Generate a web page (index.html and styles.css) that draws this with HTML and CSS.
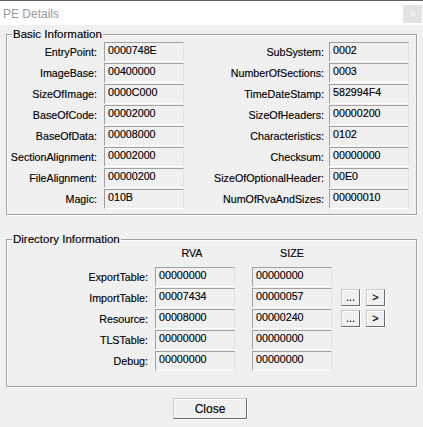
FILE: index.html
```html
<!DOCTYPE html>
<html>
<head>
<meta charset="utf-8">
<link rel="stylesheet" href="styles.css">
</head>
<body>
<div class="window">
  <div class="titlebar">
    <span class="title">PE Details</span>
    <span class="xbtn">&#x2715;</span>
  </div>
  <fieldset class="group basic">
    <legend>Basic Information</legend>
    <div class="grid4">
      <span class="lbl l1">EntryPoint:</span><span class="edit">0000748E</span>
      <span class="lbl l2">SubSystem:</span><span class="edit">0002</span>
      <span class="lbl l1">ImageBase:</span><span class="edit">00400000</span>
      <span class="lbl l2">NumberOfSections:</span><span class="edit">0003</span>
      <span class="lbl l1">SizeOfImage:</span><span class="edit">0000C000</span>
      <span class="lbl l2">TimeDateStamp:</span><span class="edit">582994F4</span>
      <span class="lbl l1">BaseOfCode:</span><span class="edit">00002000</span>
      <span class="lbl l2">SizeOfHeaders:</span><span class="edit">00000200</span>
      <span class="lbl l1">BaseOfData:</span><span class="edit">00008000</span>
      <span class="lbl l2">Characteristics:</span><span class="edit">0102</span>
      <span class="lbl l1">SectionAlignment:</span><span class="edit">00002000</span>
      <span class="lbl l2">Checksum:</span><span class="edit">00000000</span>
      <span class="lbl l1">FileAlignment:</span><span class="edit">00000200</span>
      <span class="lbl l2">SizeOfOptionalHeader:</span><span class="edit">00E0</span>
      <span class="lbl l1">Magic:</span><span class="edit">010B</span>
      <span class="lbl l2">NumOfRvaAndSizes:</span><span class="edit">00000010</span>
    </div>
  </fieldset>
  <fieldset class="group dir">
    <legend>Directory Information</legend>
    <div class="dirgrid">
      <span></span><span class="hdr hrva">RVA</span><span class="hdr hsize">SIZE</span><span></span><span></span>
      <span class="lbl d1">ExportTable:</span><span class="edit">00000000</span><span class="edit e3">00000000</span><span></span><span></span>
      <span class="lbl d1">ImportTable:</span><span class="edit">00007434</span><span class="edit e3">00000057</span><span class="btn sm">...</span><span class="btn sm">&gt;</span>
      <span class="lbl d1">Resource:</span><span class="edit">00008000</span><span class="edit e3">00000240</span><span class="btn sm">...</span><span class="btn sm">&gt;</span>
      <span class="lbl d1">TLSTable:</span><span class="edit">00000000</span><span class="edit e3">00000000</span><span></span><span></span>
      <span class="lbl d1">Debug:</span><span class="edit">00000000</span><span class="edit e3">00000000</span><span></span><span></span>
    </div>
  </fieldset>
  <div class="footer">
    <span class="btn close">Close</span>
  </div>
</div>
</body>
</html>
```

FILE: styles.css
```css
html, body {
  margin: 0;
  padding: 0;
  background: #f0f0f0;
}
.window {
  width: 423px;
  height: 427px;
  background: #f0f0f0;
  overflow: hidden;
  font-family: "Liberation Sans", Arial, sans-serif;
  color: #000;
  -webkit-text-stroke: 0.15px #000;
}
.titlebar {
  height: 24px;
  border-top: 1px solid #5e6168;
  background: #fff;
  display: flex;
  align-items: center;
  justify-content: space-between;
}
.title {
  font-size: 12px;
  color: #999;
  -webkit-text-stroke: 0;
  padding-left: 3px;
  margin-top: 1px;
}
.xbtn {
  width: 19px;
  height: 18px;
  margin-right: 1px;
  margin-top: 2px;
  background: #e3e3e3;
  color: #f7f7f7;
  -webkit-text-stroke: 0;
  font-size: 9px;
  display: flex;
  align-items: center;
  justify-content: center;
}
.group {
  margin: 0 6px;
  padding: 0;
  border: 1px solid #a0a0a0;
  box-shadow: 1px 1px 0 #fff, inset 1px 1px 0 #fff;
  min-width: 0;
}
.group legend {
  font-size: 11.5px;
  line-height: 14px;
  padding: 0 1px;
  margin-left: 5px;
  background: #f0f0f0;
}
.basic {
  margin-top: 2px;
  padding: 1px 0 5px 0;
}
.dir {
  margin-top: 17px;
  padding: 0 0 15px 0;
}
.grid4 {
  display: grid;
  grid-template-columns: 97px 80px 145px 80px;
  grid-auto-rows: 20px;
  row-gap: 1px;
}
.lbl {
  font-size: 10.7px;
  text-align: right;
  align-self: center;
  white-space: nowrap;
}
.l1 { padding-right: 7px; }
.l2 { padding-right: 5px; }
.d1 { padding-right: 7px; }
.edit {
  box-sizing: border-box;
  height: 20px;
  width: 80px;
  border: 1px solid;
  border-color: #a0a0a0 #e3e3e3 #fff #a0a0a0;
  padding: 1px 3px 0 3px;
  font-size: 10.7px;
  line-height: 13px;
  white-space: nowrap;
}
.dirgrid {
  display: grid;
  grid-template-columns: 148px 80px 97px 28px 25px;
  grid-template-rows: 20px;
  grid-auto-rows: 20px;
  row-gap: 1px;
}
.dirgrid > .hdr {
  font-size: 10.7px;
  line-height: 14px;
  text-align: center;
}
.hrva { padding-right: 6px; }
.hsize { padding-left: 17px; }
.e3 { justify-self: end; }
.btn {
  box-sizing: border-box;
  border: 1px solid;
  border-color: #c8c8c8 #696969 #696969 #c8c8c8;
  box-shadow: inset 1px 1px 0 #fff, 1px 1px 0 #fff;
  background: #f0f0f0;
  display: flex;
  align-items: center;
  justify-content: center;
}
.sm {
  width: 19px;
  height: 17px;
  justify-self: end;
  align-self: start;
  margin-top: 1px;
  font-size: 11px;
  line-height: 11px;
}
.footer {
  display: flex;
  justify-content: center;
  padding-right: 3px;
  margin-top: 11px;
}
.close {
  width: 74px;
  height: 21px;
  font-size: 12px;
}
```
